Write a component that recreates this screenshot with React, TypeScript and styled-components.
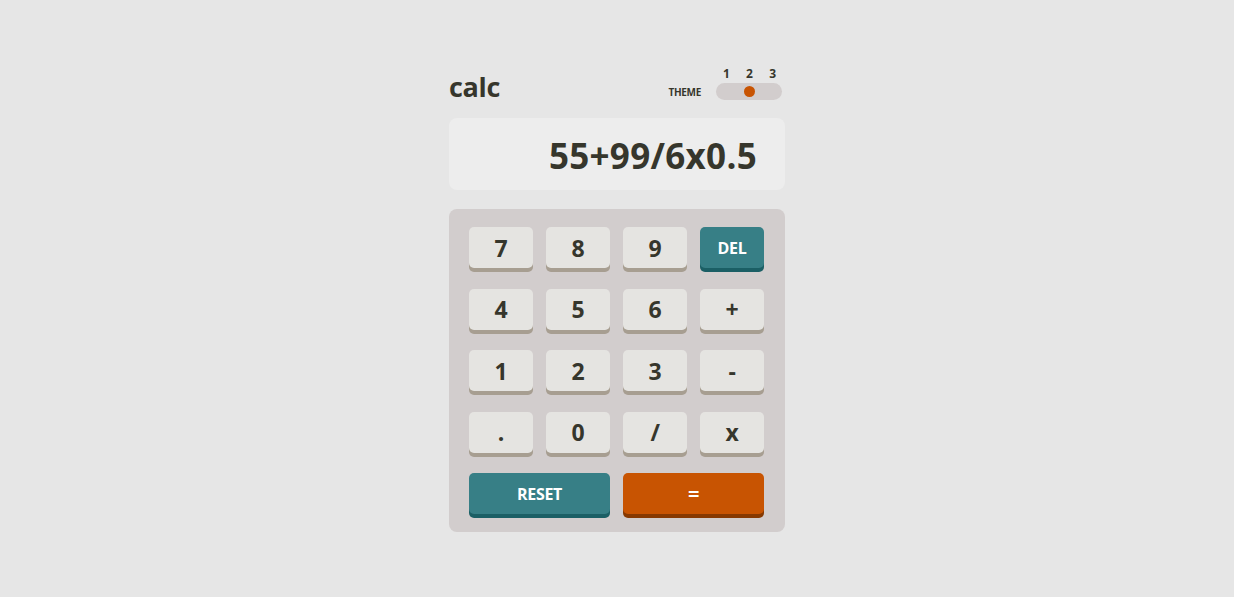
import React from "react";
import styled, { createGlobalStyle } from "styled-components";

const Global = createGlobalStyle`
  html, body { margin: 0; padding: 0; background: #e6e6e6; }
  body { font-family: "Open Sans", "DejaVu Sans", sans-serif; color: #36362c; }
`;

const Page = styled.main`
  display: flex;
  justify-content: center;
  padding-top: 64px;
`;

const Calculator = styled.div`
  width: 336px;
  display: flex;
  flex-direction: column;
`;

const Header = styled.header`
  display: flex;
  justify-content: space-between;
  align-items: flex-end;
  height: 36px;
`;

const Logo = styled.h1`
  margin: 0;
  font-size: 27px;
  font-weight: 700;
  line-height: 1;
  letter-spacing: -0.3px;
  color: #36362c;
`;

const ThemeBox = styled.div`
  display: flex;
  align-items: flex-end;
  gap: 15px;
  padding-right: 3px;
`;

const ThemeLabel = styled.span`
  font-size: 10px;
  font-weight: 700;
  letter-spacing: -0.3px;
  line-height: 1;
  padding-bottom: 3px;
`;

const ToggleCol = styled.div`
  display: flex;
  flex-direction: column;
  gap: 3px;
`;

const Numbers = styled.div`
  display: flex;
  justify-content: space-between;
  padding: 0 6px 0 7px;
  font-size: 12px;
  font-weight: 700;
  line-height: 13px;
`;

const Track = styled.div`
  width: 66px;
  height: 17px;
  border-radius: 9px;
  background: #d2cdcd;
  display: flex;
  align-items: center;
  justify-content: center;
`;

const Dot = styled.span`
  width: 11px;
  height: 11px;
  border-radius: 50%;
  background: #c85402;
`;

const Screen = styled.div`
  margin-top: 18px;
  height: 72px;
  border-radius: 8px;
  background: #ededed;
  display: flex;
  align-items: center;
  justify-content: flex-end;
  padding: 2px 28px 0 28px;
  box-sizing: border-box;
  font-size: 35px;
  font-weight: 700;
  letter-spacing: 0.3px;
`;

const Keypad = styled.div`
  margin-top: 19px;
  background: #d2cdcd;
  border-radius: 8px;
  padding: 18px 20px 14px 20px;
  display: grid;
  grid-template-columns: repeat(4, 64px);
  column-gap: 13px;
  row-gap: 16.5px;
`;

type Variant = "plain" | "teal" | "orange";

const colors: Record<Variant, { bg: string; shadow: string; fg: string }> = {
  plain: { bg: "#e5e4e1", shadow: "#a79e91", fg: "#36362c" },
  teal: { bg: "#377f86", shadow: "#1b5f65", fg: "#ffffff" },
  orange: { bg: "#c85402", shadow: "#873901", fg: "#ffffff" },
};

const Key = styled.button<{ $v: Variant; $wide?: boolean; $size: number }>`
  grid-column: ${(p) => (p.$wide ? "span 2" : "span 1")};
  height: 41px;
  margin-bottom: 4px;
  border: none;
  border-radius: 5px;
  background: ${(p) => colors[p.$v].bg};
  color: ${(p) => colors[p.$v].fg};
  box-shadow: 0 4px 0 ${(p) => colors[p.$v].shadow};
  font-family: inherit;
  font-weight: 700;
  font-size: ${(p) => p.$size}px;
  letter-spacing: -0.3px;
  display: flex;
  align-items: center;
  justify-content: center;
  padding: 0;
  cursor: pointer;
`;

const keys: { label: string; v: Variant; wide?: boolean; size: number }[] = [
  { label: "7", v: "plain", size: 23 },
  { label: "8", v: "plain", size: 23 },
  { label: "9", v: "plain", size: 23 },
  { label: "DEL", v: "teal", size: 16 },
  { label: "4", v: "plain", size: 23 },
  { label: "5", v: "plain", size: 23 },
  { label: "6", v: "plain", size: 23 },
  { label: "+", v: "plain", size: 23 },
  { label: "1", v: "plain", size: 23 },
  { label: "2", v: "plain", size: 23 },
  { label: "3", v: "plain", size: 23 },
  { label: "-", v: "plain", size: 23 },
  { label: ".", v: "plain", size: 23 },
  { label: "0", v: "plain", size: 23 },
  { label: "/", v: "plain", size: 23 },
  { label: "x", v: "plain", size: 23 },
  { label: "RESET", v: "teal", wide: true, size: 16 },
  { label: "=", v: "orange", wide: true, size: 20 },
];

export default function App() {
  return (
    <>
      <Global />
      <Page>
        <Calculator>
          <Header>
            <Logo>calc</Logo>
            <ThemeBox>
              <ThemeLabel>THEME</ThemeLabel>
              <ToggleCol>
                <Numbers>
                  <span>1</span>
                  <span>2</span>
                  <span>3</span>
                </Numbers>
                <Track>
                  <Dot />
                </Track>
              </ToggleCol>
            </ThemeBox>
          </Header>
          <Screen>55+99/6x0.5</Screen>
          <Keypad>
            {keys.map((k) => (
              <Key key={k.label} $v={k.v} $wide={k.wide} $size={k.size}>
                {k.label}
              </Key>
            ))}
          </Keypad>
        </Calculator>
      </Page>
    </>
  );
}
